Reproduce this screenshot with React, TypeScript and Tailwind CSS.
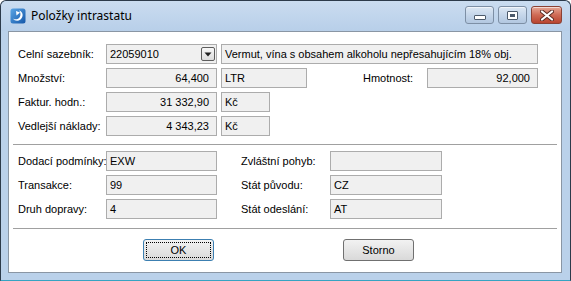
import { ReactNode } from "react";

// Win7 basic dialog "Položky intrastatu"

function Box({
  w,
  children,
  right,
}: {
  w: string;
  children?: ReactNode;
  right?: boolean;
}) {
  return (
    <div
      className={`${w} h-[20px] shrink-0 flex items-center whitespace-nowrap bg-[#f0f0f0] border border-[#acacac] ${
        right ? "justify-end pr-[7px]" : "pl-[3px]"
      }`}
    >
      {children}
    </div>
  );
}

function Label({ w, children }: { w: string; children: ReactNode }) {
  return <div className={`${w} shrink-0 whitespace-nowrap`}>{children}</div>;
}

function TitleButton({ kind }: { kind: "min" | "max" | "close" }) {
  const base =
    "h-[18px] rounded-[3px] border flex items-center justify-center shadow-[inset_0_1px_0_rgba(255,255,255,0.6)]";
  if (kind === "close") {
    return (
      <div
        className={`${base} w-[31px] border-[#8b4134] bg-gradient-to-b from-[#e4a796] via-[#cf6a55] to-[#b8442f]`}
      >
        <svg width="14" height="11" viewBox="0 0 14 11">
          <path
            d="M2 1.5 L12 9.5 M12 1.5 L2 9.5"
            stroke="#5a2a22"
            strokeWidth="4"
            strokeLinecap="round"
          />
          <path
            d="M2 1.5 L12 9.5 M12 1.5 L2 9.5"
            stroke="#ffffff"
            strokeWidth="2.2"
            strokeLinecap="round"
          />
        </svg>
      </div>
    );
  }
  return (
    <div
      className={`${base} w-[29px] border-[#7d8fa5] bg-gradient-to-b from-[#dde8f4] via-[#c5d6ea] to-[#b2c7e0]`}
    >
      {kind === "min" ? (
        <div className="w-[12px] h-[5px] mt-[4px] bg-white border border-[#4c5a6b] rounded-[1px]" />
      ) : (
        <div className="w-[11px] h-[9px] bg-white border border-[#4c5a6b] rounded-[1px] flex items-center justify-center">
          <div className="w-[5px] h-[3px] bg-[#4c5a6b]" />
        </div>
      )}
    </div>
  );
}

export default function App() {
  return (
    <div className="w-[571px] h-[281px] font-['Liberation_Sans',sans-serif] text-[11px] text-black">
      <div className="w-full h-full flex flex-col bg-[#bad1ea] border border-[#2c3a4a] border-b-[#36a3c2] rounded-t-[6px]">
        {/* Title bar */}
        <div className="h-[30px] shrink-0 flex items-center bg-gradient-to-b from-[#cadcf0] to-[#b8cfe9] rounded-t-[6px]">
          <svg className="ml-[9px]" width="16" height="16" viewBox="0 0 16 16">
            <defs>
              <linearGradient id="ig" x1="0" y1="0" x2="1" y2="1">
                <stop offset="0" stopColor="#5aa6e6" />
                <stop offset="1" stopColor="#1456a8" />
              </linearGradient>
            </defs>
            <rect x="0.5" y="0.5" width="15" height="15" rx="2.5" fill="url(#ig)" />
            <path
              d="M9 2.5 C13 3.5 14 8.5 10.5 11.5 C8 13.5 4.5 13 3 10.5 C5 12 8.5 11.5 9.8 9 C11 6.5 10.5 4 9 2.5 Z"
              fill="#ffffff"
            />
            <path d="M6 3 L10 4.5 L6.5 7.5 Z" fill="#ffffff" />
          </svg>
          <span className="ml-[5px] text-[12px] font-['Noto_Sans',sans-serif] text-black">
            Položky intrastatu
          </span>
          <div className="ml-auto mr-[8px] mt-[-2px] flex gap-[4px]">
            <TitleButton kind="min" />
            <TitleButton kind="max" />
            <TitleButton kind="close" />
          </div>
        </div>

        {/* Content */}
        <div className="flex-1 ml-[7px] mr-[8px] mb-[7px] bg-white border border-[#8a96a4] flex flex-col pt-[12px]">
          <div className="pl-[9px] flex flex-col gap-[4px]">
            <div className="flex items-center">
              <Label w="w-[88px]">Celní sazebník:</Label>
              <div className="w-[111px] h-[20px] shrink-0 flex items-center bg-[#f0f0f0] border border-[#acacac] pl-[3px] pr-[1px]">
                <span className="flex-1">22059010</span>
                <div className="w-[14px] h-[14px] rounded-[2px] border border-[#5d5d5d] bg-gradient-to-b from-[#f8f8f8] to-[#dcdcdc] flex items-center justify-center">
                  <svg width="8" height="5" viewBox="0 0 8 5">
                    <path d="M0.5 0.5 L7.5 0.5 L4 4.5 Z" fill="#202020" />
                  </svg>
                </div>
              </div>
              <div className="ml-[4px]">
                <Box w="w-[317px]">Vermut, vína s obsahem alkoholu nepřesahujícím 18% obj.</Box>
              </div>
            </div>

            <div className="flex items-center">
              <Label w="w-[88px]">Množství:</Label>
              <Box w="w-[111px]" right>
                64,400
              </Box>
              <div className="ml-[4px]">
                <Box w="w-[86px]">LTR</Box>
              </div>
              <div className="ml-[56px] w-[64px] shrink-0">Hmotnost:</div>
              <Box w="w-[111px]" right>
                92,000
              </Box>
            </div>

            <div className="flex items-center">
              <Label w="w-[88px]">Faktur. hodn.:</Label>
              <Box w="w-[111px]" right>
                31 332,90
              </Box>
              <div className="ml-[4px]">
                <Box w="w-[49px]">Kč</Box>
              </div>
            </div>

            <div className="flex items-center">
              <Label w="w-[88px]">Vedlejší náklady:</Label>
              <Box w="w-[111px]" right>
                4 343,23
              </Box>
              <div className="ml-[4px]">
                <Box w="w-[49px]">Kč</Box>
              </div>
            </div>
          </div>

          <div className="mx-[4px] mt-[8px] h-px bg-[#a0a0a0]" />

          <div className="pl-[9px] mt-[6px] flex flex-col gap-[4px]">
            {[
              ["Dodací podmínky:", "EXW", "Zvláštní pohyb:", ""],
              ["Transakce:", "99", "Stát původu:", "CZ"],
              ["Druh dopravy:", "4", "Stát odeslání:", "AT"],
            ].map(([l1, v1, l2, v2]) => (
              <div key={l1} className="flex items-center">
                <Label w="w-[88px]">{l1}</Label>
                <Box w="w-[111px]">{v1}</Box>
                <div className="ml-[24px] w-[89px] shrink-0 whitespace-nowrap">{l2}</div>
                <Box w="w-[112px]">{v2}</Box>
              </div>
            ))}
          </div>

          <div className="mx-[4px] mt-[9px] h-px bg-[#a0a0a0]" />

          <div className="mt-[10px] flex">
            <button className="ml-[134px] w-[71px] h-[22px] rounded-[3px] border border-[#3c7fb1] bg-gradient-to-b from-[#f2f2f2] to-[#d9d9d9] p-[2px]">
              <div className="w-full h-full border border-dotted border-black flex items-center justify-center">
                OK
              </div>
            </button>
            <button className="ml-[129px] w-[71px] h-[22px] rounded-[3px] border border-[#707070] bg-gradient-to-b from-[#f2f2f2] to-[#d9d9d9] flex items-center justify-center">
              Storno
            </button>
          </div>
        </div>
      </div>
    </div>
  );
}
